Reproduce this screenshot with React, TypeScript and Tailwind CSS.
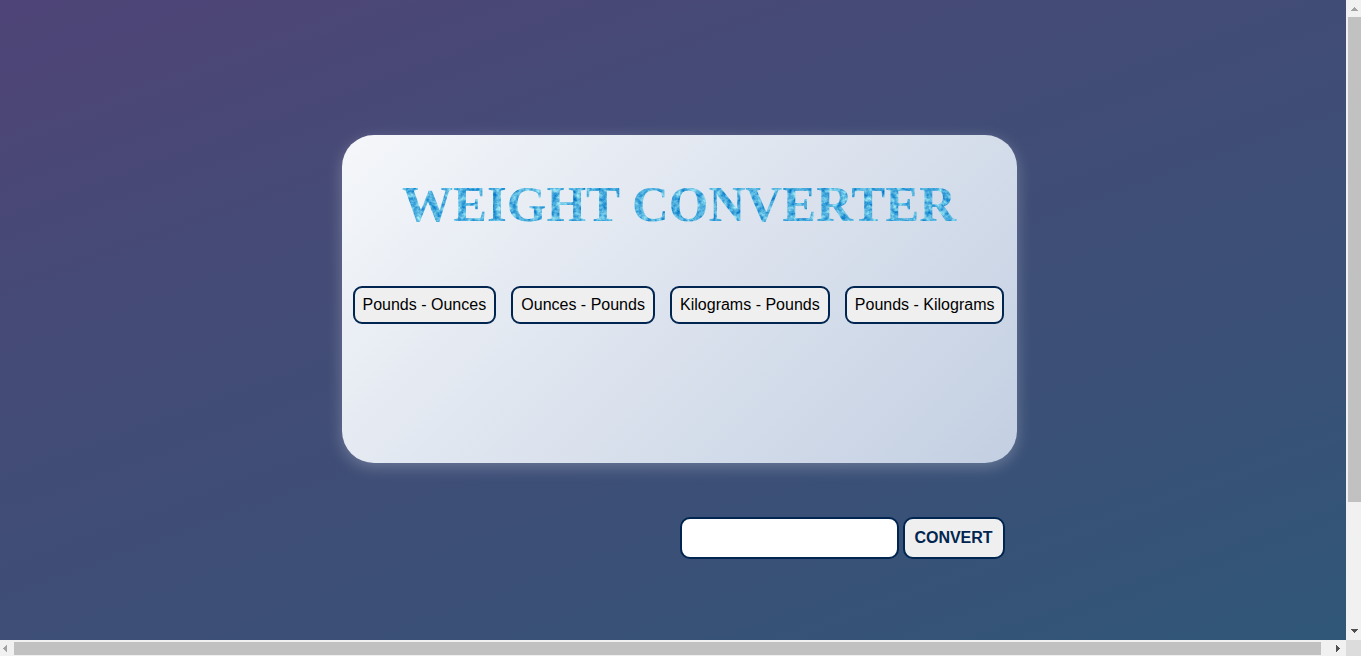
const conversions = ['Pounds - Ounces', 'Ounces - Pounds', 'Kilograms - Pounds', 'Pounds - Kilograms'];

function WaterTexture() {
  return (
    <svg className="absolute size-0" aria-hidden="true">
      <filter id="water" x="0" y="0" width="100%" height="100%" colorInterpolationFilters="sRGB">
        <feTurbulence type="fractalNoise" baseFrequency="0.2 0.22" numOctaves="4" seed="8" result="noise" />
        <feColorMatrix
          in="noise"
          type="matrix"
          values="0.9 0 0 0 -0.13  0.65 0 0 0 0.37  0.25 0 0 0 0.75  0 0 0 0 1"
          result="water"
        />
        <feComposite in="water" in2="SourceAlpha" operator="in" />
      </filter>
    </svg>
  );
}

function VerticalScrollbar() {
  return (
    <div className="flex flex-col items-end bg-[#f1f1f1]" aria-hidden="true">
      <svg className="h-[17px] w-[13px] shrink-0" viewBox="0 0 13 17" shapeRendering="crispEdges">
        <path d="M6 7h1v1h1v1h1v1h1v1H3v-1h1V9h1V8h1z" fill="#a3a3a3" />
      </svg>
      <div className="flex w-[13px] flex-1 flex-col">
        <div className="h-4/5 bg-[#c1c1c1]" />
      </div>
      <svg className="h-[17px] w-[13px] shrink-0" viewBox="0 0 13 17" shapeRendering="crispEdges">
        <path d="M3 6h7v1H9v1H8v1H7v1H6V9H5V8H4V7H3z" fill="#505050" />
      </svg>
    </div>
  );
}

function HorizontalScrollbar() {
  return (
    <div className="flex items-center bg-[#f1f1f1]" aria-hidden="true">
      <svg className="h-[13px] w-[14px] shrink-0" viewBox="0 0 14 13" shapeRendering="crispEdges">
        <path d="M3 6h1V5h1V4h1V3h1v7H6V9H5V8H4V7H3z" fill="#a3a3a3" />
      </svg>
      <div className="mr-2 h-[13px] flex-1 bg-[#c1c1c1]" />
      <svg className="h-[13px] w-[17px] shrink-0" viewBox="0 0 17 13" shapeRendering="crispEdges">
        <path d="M7 3h1v1h1v1h1v1h1v1h-1v1H9v1H8v1H7z" fill="#505050" />
      </svg>
    </div>
  );
}

export default function App() {
  return (
    <div className="grid min-h-screen grid-cols-[1fr_15px] grid-rows-[1fr_16px] font-['Liberation_Sans',Arial,sans-serif]">
      <main className="flex justify-center bg-[linear-gradient(160deg,#4f4477_0%,#444b76_33%,#3a5077_72%,#305777_100%)] pt-[135px] pl-3">
        <WaterTexture />
        <div className="w-[675px]">
          <section className="h-[328px] rounded-[32px] bg-[linear-gradient(135deg,#f5f7fa_0%,#c3cfe2_100%)] pt-10 shadow-[0_4px_15px_rgba(255,255,255,0.25)]">
            <h1 className="text-center font-['Liberation_Serif','Times_New_Roman',serif] text-[51px] leading-[58px] font-bold whitespace-nowrap text-[#3fa9dd] [filter:url(#water)]">
              WEIGHT CONVERTER
            </h1>
            <div className="mt-[53px] flex justify-between pr-3 pl-[11px]">
              {conversions.map((label) => (
                <button
                  key={label}
                  type="button"
                  className="h-[38px] rounded-[9px] border-2 border-[#002550] bg-[#efefef] px-2 text-base whitespace-nowrap text-black"
                >
                  {label}
                </button>
              ))}
            </div>
          </section>
          <form className="mt-[54px] flex justify-end gap-1 pr-3" onSubmit={(event) => event.preventDefault()}>
            <input
              type="text"
              aria-label="Weight"
              className="h-[42px] w-[219px] rounded-[10px] border-2 border-[#002550] bg-white px-2 text-base"
            />
            <button
              type="submit"
              className="h-[42px] w-[102px] rounded-[10px] border-2 border-[#002550] bg-[#efefef] text-base font-bold text-[#002550]"
            >
              CONVERT
            </button>
          </form>
        </div>
      </main>
      <VerticalScrollbar />
      <HorizontalScrollbar />
      <div className="bg-[#dcdcdc]" />
    </div>
  );
}
